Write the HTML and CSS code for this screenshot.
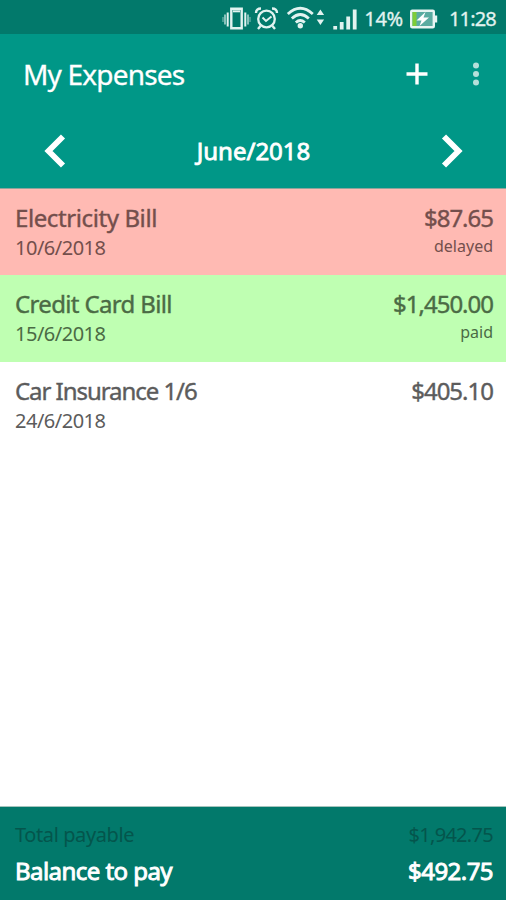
FILE: index.html
```html
<!DOCTYPE html>
<html lang="en">
<head>
  <meta charset="UTF-8">
  <title>My Expenses</title>
  <meta name="viewport" content="width=device-width, initial-scale=1.0" />
  <link rel="stylesheet" href="styles.css">
</head>
<body>
  <div class="status-bar">
    <svg class="status-icons" width="140" height="34" viewBox="0 0 140 34" fill="none" stroke="#e2f3f0" stroke-width="2">
      <!-- vibrate -->
      <path d="M11.3 8.700h10.400v19.600h-10.400z" stroke-width="2.400"/>
      <path d="M13 11.300h7" stroke-width="2"/>
      <path d="M7.700 12.500v14M25.300 12.500v14" stroke-width="2"/>
      <path d="M5 14.500v10M28 14.500v10" stroke-width="1.600" opacity=".75"/>
      <path d="M3 17v5M30 17v5" stroke-width="1.200" opacity=".5"/>
      <!-- alarm -->
      <circle cx="46.500" cy="19" r="8.300" stroke-width="2.300"/>
      <path d="M42.500 17.500l3.500 3.500 5.500-4.500"/>
      <path d="M36 13q0-4.500 5-4.500M57 13q0-4.500-5-4.500M40.500 26l-2.500 3M52.500 26l2.500 3" stroke-width="2.400"/>
      <!-- wifi -->
      <path d="M67.800 14q12.500-11.500 25 0M71.800 18.500q8.500-8 17 0M75.800 22.500q4.500-4 9 0" stroke-width="2.800"/>
      <circle cx="80.300" cy="25.800" r="2.700" fill="#e2f3f0" stroke="none"/>
      <path d="M96.700 15l3.700-5.500 3.700 5.500zM96.700 19.500l3.700 5.500 3.700-5.500z" fill="#e2f3f0" stroke="none"/>
      <!-- signal -->
      <path d="M115.200 26v3.500M121.700 22v7.500M128.200 16.500v13M134.700 9.500v20" stroke-width="3.800"/>
    </svg>
    <span class="battery-text">14%</span>
    <svg class="battery" width="28" height="20" viewBox="0 0 28 20">
      <rect x="1.200" y="1.700" width="22.600" height="16.600" rx="1" fill="#5aaca1" stroke="#e8f5f2" stroke-width="2.400"/>
      <path d="M2.500 3h4v14h-4z" fill="#7dcc38"/>
      <path d="M25 6.500h2.200v7H25z" fill="#e8f5f2"/>
      <path d="M15.500 3L6.500 11.500h5L9.500 17l9.500-8.500h-5.500z" fill="#fff"/>
    </svg>
    <span class="clock">11:28</span>
  </div>

  <header class="app-bar">
    <h1 class="app-title">My Expenses</h1>
    <svg class="add-icon" width="22" height="22" viewBox="0 0 22 22" stroke="#fff" stroke-width="3.400">
      <path d="M.500 11h21M11 .500v21"/>
    </svg>
    <svg class="menu-icon" width="8" height="24" viewBox="0 0 8 24" fill="#b5e0da">
      <circle cx="4" cy="3.500" r="3"/>
      <circle cx="4" cy="12" r="3"/>
      <circle cx="4" cy="20.500" r="3"/>
    </svg>
  </header>

  <nav class="month-nav">
    <svg width="22" height="34" viewBox="0 0 22 34" fill="none" stroke="#fff" stroke-width="5.800">
      <path d="M19 2.500L4.500 17 19 31.500"/>
    </svg>
    <span class="month">June/2018</span>
    <svg width="22" height="34" viewBox="0 0 22 34" fill="none" stroke="#fff" stroke-width="5.800">
      <path d="M3 2.500L17.500 17 3 31.500"/>
    </svg>
  </nav>

  <main class="expenses">
    <div class="expense delayed">
      <div class="info">
        <span class="name">Electricity Bill</span>
        <span class="date">10/6/2018</span>
      </div>
      <div class="value">
        <span class="amount">$87.65</span>
        <span class="state">delayed</span>
      </div>
    </div>
    <div class="expense paid">
      <div class="info">
        <span class="name tight">Credit Card Bill</span>
        <span class="date">15/6/2018</span>
      </div>
      <div class="value">
        <span class="amount">$1,450.00</span>
        <span class="state">paid</span>
      </div>
    </div>
    <div class="expense">
      <div class="info">
        <span class="name tighter">Car Insurance 1/6</span>
        <span class="date">24/6/2018</span>
      </div>
      <div class="value">
        <span class="amount">$405.10</span>
      </div>
    </div>
  </main>

  <footer class="totals">
    <div class="total-row">
      <span>Total payable</span>
      <span class="total-value">$1,942.75</span>
    </div>
    <div class="balance-row">
      <span>Balance to pay</span>
      <span>$492.75</span>
    </div>
  </footer>
</body>
</html>
```

FILE: styles.css
```css
* {
  box-sizing: border-box;
}

body {
  margin: 0;
  height: 900px;
  display: flex;
  flex-direction: column;
  background-color: #fff;
  font-family: "Noto Sans", sans-serif;
  color: #fff;
  overflow: hidden;
}

svg {
  flex: none;
  display: block;
}

/* Status bar */
.status-bar {
  display: flex;
  align-items: center;
  justify-content: flex-end;
  height: 34px;
  padding-right: 10px;
  background-color: #02796b;
  font-size: 20px;
  line-height: 34px;
  color: #e2f3f0;
  -webkit-text-stroke: 0.3px #e2f3f0;
}

.battery-text {
  margin-left: 4px;
  padding-top: 3px;
  letter-spacing: -0.3px;
}

.battery {
  margin: 3px 0 0 7px;
}

.clock {
  margin-left: 11px;
  padding-top: 3px;
  letter-spacing: -0.8px;
}

/* App bar */
.app-bar {
  display: flex;
  align-items: center;
  height: 80px;
  padding: 0 26px 0 23px;
  background-color: #009787;
}

.app-title {
  flex: 1;
  margin: 0;
  font-size: 28px;
  font-weight: 400;
  letter-spacing: -0.8px;
  -webkit-text-stroke: 0.3px #fff;
}

.menu-icon {
  margin-left: 44px;
}

.month-nav {
  display: flex;
  align-items: center;
  justify-content: space-between;
  height: 75px;
  padding: 0 43px 0 44px;
  background-color: #009787;
  border-bottom: 1px solid #8fa39b;
}

.month {
  padding-bottom: 2px;
  font-size: 24px;
  -webkit-text-stroke: 0.8px #fff;
}

/* Expense list */
.expenses {
  flex: 1;
}

.expense {
  display: flex;
  justify-content: space-between;
  height: 86.4px;
  padding: 14px 13px 0 15px;
  color: #5c5c5c;
}

.expense.delayed {
  background-color: #ffbab3;
  color: #744f4c;
}

.expense.paid {
  background-color: #bfffb2;
  color: #4b6b45;
}

.info,
.value {
  display: flex;
  flex-direction: column;
}

.value {
  align-items: flex-end;
}

.name,
.amount {
  font-size: 24px;
  line-height: 30px;
  letter-spacing: -0.4px;
  -webkit-text-stroke: 0.4px currentColor;
}

.name.tight {
  letter-spacing: -0.65px;
}

.name.tighter {
  letter-spacing: -1.05px;
}

.amount {
  letter-spacing: -1px;
}

.date {
  font-size: 20px;
  line-height: 29px;
  letter-spacing: -0.5px;
}

.state {
  font-size: 16px;
  line-height: 26px;
}

/* Totals */
.totals {
  height: 94px;
  padding: 14px 13px 0 15px;
  background-color: #02796b;
  border-top: 1px solid #a5c4bd;
}

.total-row,
.balance-row {
  display: flex;
  justify-content: space-between;
}

.total-row {
  font-size: 20px;
  line-height: 28px;
  letter-spacing: -0.4px;
  color: #04554c;
}

.total-value {
  letter-spacing: -0.7px;
}

.balance-row {
  font-size: 24px;
  line-height: 43px;
  letter-spacing: -0.55px;
  -webkit-text-stroke: 0.9px #fff;
}
```
